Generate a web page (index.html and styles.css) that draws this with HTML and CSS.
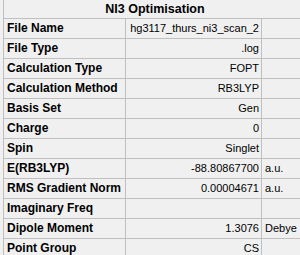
FILE: index.html
```html
<!DOCTYPE html>
<html>
<head>
<meta charset="utf-8">
<link rel="stylesheet" href="styles.css">
</head>
<body>
<div class="sheet">
  <div class="title">NI3 Optimisation</div>
  <div class="row"><div class="label">File Name</div><div class="value">hg3117_thurs_ni3_scan_2</div><div class="unit"></div></div>
  <div class="row"><div class="label">File Type</div><div class="value">.log</div><div class="unit"></div></div>
  <div class="row"><div class="label">Calculation Type</div><div class="value">FOPT</div><div class="unit"></div></div>
  <div class="row"><div class="label">Calculation Method</div><div class="value">RB3LYP</div><div class="unit"></div></div>
  <div class="row"><div class="label">Basis Set</div><div class="value">Gen</div><div class="unit"></div></div>
  <div class="row"><div class="label">Charge</div><div class="value">0</div><div class="unit"></div></div>
  <div class="row"><div class="label">Spin</div><div class="value">Singlet</div><div class="unit"></div></div>
  <div class="row"><div class="label">E(RB3LYP)</div><div class="value">-88.80867700</div><div class="unit">a.u.</div></div>
  <div class="row"><div class="label">RMS Gradient Norm</div><div class="value">0.00004671</div><div class="unit">a.u.</div></div>
  <div class="row"><div class="label">Imaginary Freq</div><div class="value"></div><div class="unit"></div></div>
  <div class="row"><div class="label">Dipole Moment</div><div class="value">1.3076</div><div class="unit">Debye</div></div>
  <div class="row"><div class="label">Point Group</div><div class="value">CS</div><div class="unit"></div></div>
</div>
</body>
</html>
```

FILE: styles.css
```css
html, body {
  margin: 0;
  padding: 0;
  background: #f0f0f0;
}

body {
  font-family: "Liberation Sans", Arial, sans-serif;
  font-size: 11px;
  color: #000;
  overflow: hidden;
}

.sheet {
  margin-left: 3px;
  border-left: 1px solid #bfbfbf;
}

.title {
  box-sizing: border-box;
  height: 19px;
  border-bottom: 1px solid #bfbfbf;
  text-align: center;
  font-weight: bold;
  font-size: 12.5px;
  line-height: 18px;
  padding-left: 6px;
}

.row {
  box-sizing: border-box;
  display: flex;
  height: 20px;
  border-bottom: 1px solid #bfbfbf;
  line-height: 19px;
}

.label {
  box-sizing: border-box;
  width: 122px;
  border-right: 1px solid #bfbfbf;
  padding-left: 3px;
  font-weight: bold;
  font-size: 12px;
  white-space: nowrap;
}

.value {
  box-sizing: border-box;
  width: 136px;
  border-right: 1px solid #bfbfbf;
  padding-right: 2px;
  text-align: right;
  white-space: nowrap;
}

.unit {
  flex: 1;
  padding-left: 3px;
  white-space: nowrap;
}
```
